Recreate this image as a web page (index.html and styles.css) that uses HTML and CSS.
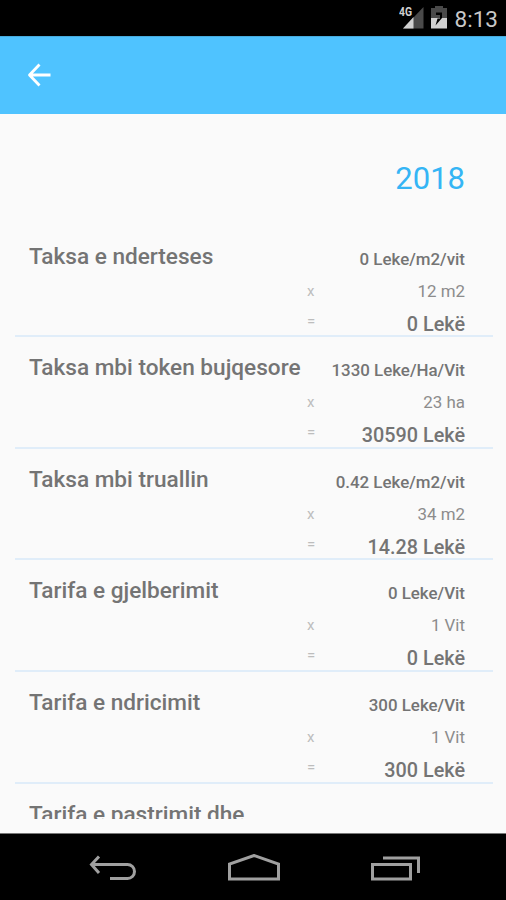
FILE: index.html
```html
<!DOCTYPE html>
<html lang="sq">
<head>
    <meta charset="utf-8">
    <title>Taksat</title>
    <link rel="stylesheet" href="styles.css">
</head>
<body>
    <div class="status-bar">
        <svg class="signal" width="25" height="23" viewBox="0 0 25 23">
            <path d="M24.500 1V22.500H4z" fill="#4a4a4a"/>
            <path d="M14.500 11V22.500H4z" fill="#d0d0d0"/>
            <rect x="0" y="0" width="14" height="11" fill="#000"/>
            <text class="network" x="0" y="10" textLength="13" lengthAdjust="spacingAndGlyphs">4G</text>
        </svg>
        <svg class="battery" width="16" height="23" viewBox="0 0 16 23">
            <path d="M4 0h8v2h4v10H0V2h4z" fill="#4a4a4a"/>
            <path d="M0 12h16v10.500H0z" fill="#d0d0d0"/>
            <path d="M5 6.500h6V12L4.500 19.500l2-7H9V9H5z" fill="#000"/>
        </svg>
        <span class="clock">8:13</span>
    </div>

    <div class="app-bar">
        <svg width="24" height="24" viewBox="0 0 24 24" fill="none" stroke="#fff" stroke-width="2.8" stroke-linejoin="round">
            <path d="M12.500 1.500L2.500 12l10 10.500M2.500 12H23.500"/>
        </svg>
    </div>

    <div class="content">
        <h1 class="year">2018</h1>

        <ul class="tax-list">
            <li class="tax-item">
                <div class="name">Taksa e nderteses</div>
                <div class="rate">0 Leke/m2/vit</div>
                <div class="line"><span class="op">x</span><span class="qty">12 m2</span></div>
                <div class="line"><span class="op eq">=</span><span class="total">0 Lekë</span></div>
            </li>
            <li class="tax-item">
                <div class="name">Taksa mbi token bujqesore</div>
                <div class="rate">1330 Leke/Ha/Vit</div>
                <div class="line"><span class="op">x</span><span class="qty">23 ha</span></div>
                <div class="line"><span class="op eq">=</span><span class="total">30590 Lekë</span></div>
            </li>
            <li class="tax-item">
                <div class="name">Taksa mbi truallin</div>
                <div class="rate">0.42 Leke/m2/vit</div>
                <div class="line"><span class="op">x</span><span class="qty">34 m2</span></div>
                <div class="line"><span class="op eq">=</span><span class="total">14.28 Lekë</span></div>
            </li>
            <li class="tax-item">
                <div class="name">Tarifa e gjelberimit</div>
                <div class="rate">0 Leke/Vit</div>
                <div class="line"><span class="op">x</span><span class="qty">1 Vit</span></div>
                <div class="line"><span class="op eq">=</span><span class="total">0 Lekë</span></div>
            </li>
            <li class="tax-item">
                <div class="name">Tarifa e ndricimit</div>
                <div class="rate">300 Leke/Vit</div>
                <div class="line"><span class="op">x</span><span class="qty">1 Vit</span></div>
                <div class="line"><span class="op eq">=</span><span class="total">300 Lekë</span></div>
            </li>
            <li class="tax-item">
                <div class="name">Tarifa e pastrimit dhe</div>
            </li>
        </ul>
    </div>

    <div class="nav-bar">
        <svg width="48" height="28" viewBox="0 0 48 28" fill="none" stroke="#a0a0a0" stroke-width="3">
            <path d="M10 2.500L2.500 10.500l7.500 8.500M2.500 10.500h36a7 7 0 0 1 0 14H21"/>
        </svg>
        <svg width="52" height="28" viewBox="0 0 52 28" fill="none" stroke="#a0a0a0" stroke-width="3">
            <path d="M1.500 25V10L26 1.500 50.500 10v15z"/>
        </svg>
        <svg width="50" height="28" viewBox="0 0 50 28" fill="none" stroke="#a0a0a0" stroke-width="3">
            <path d="M1.500 10.500h38v14.500h-38zM12 4h35.500V19"/>
        </svg>
    </div>
</body>
</html>
```

FILE: styles.css
```css
* {
    box-sizing: border-box;
}

body {
    margin: 0;
    height: 900px;
    display: flex;
    flex-direction: column;
    overflow: hidden;
    background: #fafafa;
    color: #747474;
    font-family: Roboto, sans-serif;
}

.status-bar {
    height: 36px;
    flex: none;
    display: flex;
    align-items: flex-start;
    justify-content: flex-end;
    padding: 6px 8px 0 0;
    background: #000;
}

.network {
    fill: #d0d0d0;
    font-size: 12px;
    font-weight: 700;
}

.battery {
    margin-left: 7px;
}

.clock {
    margin-left: 8px;
    font-size: 22.5px;
    line-height: 27px;
    color: #c8c8c8;
}

.app-bar {
    height: 78px;
    flex: none;
    display: flex;
    align-items: center;
    padding: 0 0 2px 27px;
    background: #4fc3ff;
    border-top: 1px solid #48abdc;
}

.content {
    height: 705px;
    flex: none;
    overflow: hidden;
    padding: 0 13px 0 15px;
}

.year {
    margin: 46px 28px 0 0;
    height: 65.7px;
    line-height: 38px;
    font-size: 31px;
    font-weight: 400;
    text-align: right;
    color: #35b5f5;
}

.tax-list {
    margin: 0;
    padding: 0;
    list-style: none;
}

.tax-item {
    height: 111.6px;
    display: grid;
    grid-template-columns: auto 1fr;
    grid-template-rows: 49px 32px 28px;
    padding: 0 28px 0 14px;
    border-bottom: 2px solid #e0edf9;
}

.name {
    padding-top: 17px;
    font-size: 22.6px;
    line-height: 28px;
    font-weight: 500;
    white-space: nowrap;
}

.rate {
    padding-top: 21px;
    font-size: 16.9px;
    line-height: 24px;
    font-weight: 500;
    text-align: right;
}

.line {
    grid-column: 1 / 3;
    display: flex;
    justify-content: space-between;
    padding-left: 278px;
    line-height: 32px;
}

.op {
    font-size: 15px;
    color: #bdbdbd;
}

.eq {
    line-height: 28px;
}

.qty {
    font-size: 16.9px;
    color: #8c8c8c;
}

.total {
    font-size: 19.8px;
    line-height: 36px;
    font-weight: 500;
}

.nav-bar {
    flex: 1;
    display: flex;
    justify-content: center;
    gap: 91px;
    padding: 20px 0 0 4px;
    margin-top: 14px;
    background: #000;
    border-top: 1px solid #777;
}
```
